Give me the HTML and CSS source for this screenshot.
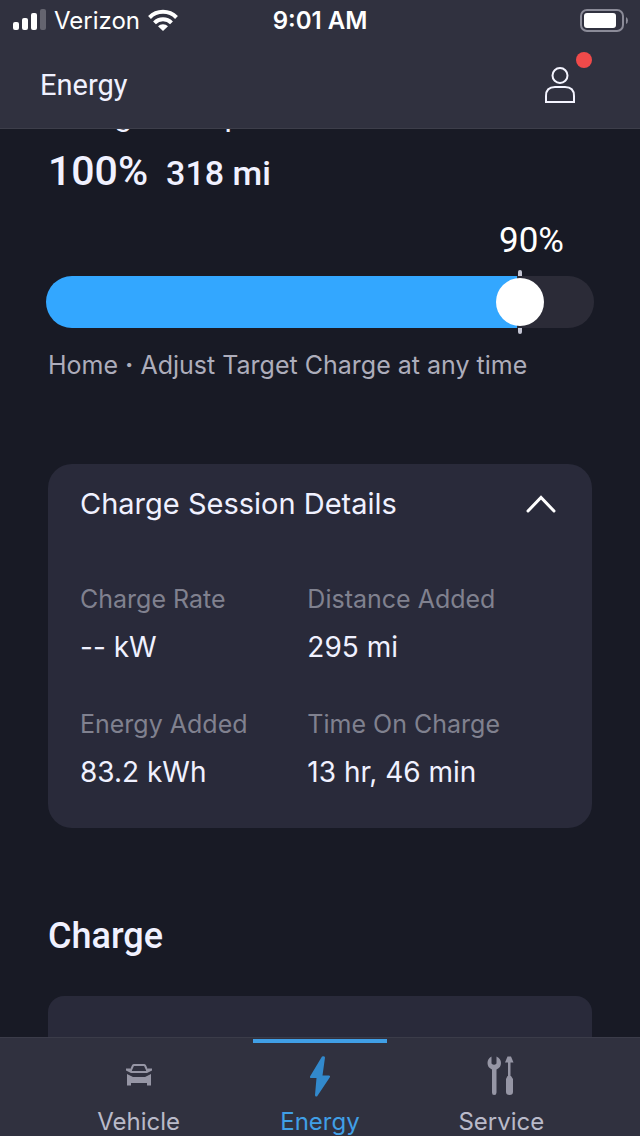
FILE: index.html
```
<!DOCTYPE html>
<html lang="en">
<head>
    <meta charset="utf-8" />
    <meta name="viewport" content="width=device-width, initial-scale=1" />
    <title>Energy</title>

    <link rel="stylesheet" href="styles.css">
</head>

<body>

    <header class="topBar">
        <div class="statusBar">
            <div class="carrier">
                <svg width="34" height="22" viewBox="0 0 34 22" fill="#fff" aria-hidden="true">
                    <rect x="1" y="13" width="6" height="8" rx="2"/>
                    <rect x="10" y="9" width="6" height="12" rx="2"/>
                    <rect x="19" y="4" width="6" height="17" rx="2"/>
                    <rect x="28" y="0" width="6" height="21" rx="2" opacity=".25"/>
                </svg>
                <span>Verizon</span>
                <svg width="30" height="22" viewBox="0 0 30 22" aria-hidden="true">
                    <g fill="none" stroke="#fff" stroke-width="4">
                        <path d="M1.5 8.5a19 19 0 0 1 27 0"/>
                        <path d="M6.5 13.8a12 12 0 0 1 17 0"/>
                    </g>
                    <path fill="#fff" d="M10 17.3a7 7 0 0 1 10 0L15 22z"/>
                </svg>
            </div>
            <span class="clock">9:01 AM</span>
            <svg class="battery" width="48" height="23" viewBox="0 0 48 23" aria-hidden="true">
                <rect x="1" y="1" width="42" height="21" rx="6" fill="none" stroke="#8b8b98" stroke-width="2"/>
                <rect x="4" y="4" width="32" height="15" rx="3" fill="#fff"/>
                <path d="M46 8q2 1 2 3.500t-2 3.500z" fill="#8b8b98"/>
            </svg>
        </div>
        <div class="titleRow">
            <h1>Energy</h1>
            <button class="profile" aria-label="Profile">
                <svg width="30" height="38" viewBox="0 0 30 38" fill="none" stroke="#f4f4ff" stroke-width="2" aria-hidden="true">
                    <circle cx="15" cy="9.500" r="7.500"/>
                    <path d="M1 36V30q0-9 9-9h10q9 0 9 9v6z"/>
                </svg>
                <span class="dot"></span>
            </button>
        </div>
    </header>

    <main>
        <h2 class="state">Charge Complete</h2>
        <p class="level"><span class="percent">100%</span><span>318 mi</span></p>

        <section class="target">
            <output for="targetCharge">90%</output>
            <div class="sliderWrap">
                <input type="range" id="targetCharge" min="0" max="100" value="90" aria-label="Target Charge">
            </div>
            <p class="hint">Home <b>·</b> Adjust Target Charge at any time</p>
        </section>

        <section class="card details">
            <button class="cardHead" aria-expanded="true">
                <span>Charge Session Details</span>
                <svg width="30" height="18" viewBox="0 0 30 18" fill="none" stroke="#fff" stroke-width="3" stroke-linecap="round" aria-hidden="true">
                    <path d="M2 16L15 2.500L28 16"/>
                </svg>
            </button>
            <dl>
                <div><dt>Charge Rate</dt><dd>-- kW</dd></div>
                <div><dt>Distance Added</dt><dd>295 mi</dd></div>
                <div><dt>Energy Added</dt><dd>83.2 kWh</dd></div>
                <div><dt>Time On Charge</dt><dd>13 hr, 46 min</dd></div>
            </dl>
        </section>

        <h2 class="heading">Charge</h2>
        <section class="card nextCard"></section>
    </main>

    <nav>
        <a href="#vehicle">
            <svg width="28" height="42" viewBox="0 0 28 42" aria-hidden="true">
                <path d="M5.500 16L8 10.500Q8.300 10 9 10H19Q19.700 10 20 10.500L22.500 16" fill="none" stroke="#9696a5" stroke-width="2"/>
                <path d="M1 13.500h4l2 2.500h14l2-2.500h4v2l-5 2.500H6L1 15.500z" fill="#9696a5"/>
                <path d="M2 19l6 3h12l6-3v11.500h-4V28H6v2.500H2z" fill="#9696a5"/>
            </svg>
            <span>Vehicle</span>
        </a>
        <a href="#energy" class="active" aria-current="page">
            <svg width="28" height="42" viewBox="0 0 28 42" aria-hidden="true">
                <path d="M16 1.500L4 21.500Q3.500 23 5 23H10.500L9 40Q9 42 11 41.500L24 22Q24.500 20.500 23 20.500H16.500L19 2.500Q18.500 .500 16 1.500z" fill="#3289cc"/>
            </svg>
            <span>Energy</span>
        </a>
        <a href="#service">
            <svg width="28" height="42" viewBox="0 0 28 42" fill="#9696a5" aria-hidden="true">
                <path d="M4.500 1.500V8.500q2.500 2.500 5 0V1.500Q14 3.500 14 8T9.500 14.500V37.500Q9.500 40 7.200 40T5 37.500V14.500Q.500 12.500 .500 8T4.500 1.500z"/>
                <path d="M20.500 1.500h3.500l2.500 6h-3v14.500h-2.500V7.500h-3z"/>
                <path d="M20.500 21h3.500l2 3v13q0 3-3.500 3T19 37V24z"/>
            </svg>
            <span>Service</span>
        </a>
    </nav>

</body>
</html>
```
FILE: styles.css
```
*{
    box-sizing: border-box;
}

body{
    margin: 0;
    height: 100vh;
    display: flex;
    flex-direction: column;
    background: #181a25;
    color: #f0f1ff;
    font-family: Inter, "Liberation Sans", sans-serif;
    font-size: 24px;
}

h1, h2, p, dl, dd{
    margin: 0;
}

button{
    border: 0;
    padding: 0;
    background: none;
    color: inherit;
    font: inherit;
    cursor: pointer;
}

svg{
    display: block;
    flex: none;
}

/* status bar and title */

.topBar{
    flex: none;
    background: #30313f;
    border-bottom: 1px solid #3d3e4a;
}

.statusBar{
    display: grid;
    grid-template-columns: 1fr auto 1fr;
    align-items: center;
    height: 40px;
    padding: 0 12px;
    color: #fff;
}

.carrier{
    display: flex;
    align-items: center;
    gap: 8px;
}

.clock{
    font-weight: 600;
}

.battery{
    justify-self: end;
}

.titleRow{
    display: flex;
    justify-content: space-between;
    align-items: center;
    height: 88px;
    padding: 2px 65px 0 40px;
}

h1, h2, .level, output{
    font-family: Roboto, "Liberation Sans", sans-serif;
}

h1{
    font-size: 29px;
    line-height: 32px;
    font-weight: 400;
}

.profile{
    position: relative;
}

.dot{
    position: absolute;
    top: -14px;
    right: -17px;
    width: 16px;
    height: 16px;
    border-radius: 50%;
    background: #f04a4a;
}

/* scrolled content */

main{
    flex: 1;
    min-height: 0;
    overflow: hidden;
    padding: 0 48px;
}

.heading{
    font-size: 36px;
    line-height: 48px;
    font-weight: 500;
}

/* scrolled up under the title bar */
.state{
    margin-top: -30px;
    font-size: 32px;
    line-height: 32px;
    font-weight: 400;
}

.level{
    display: flex;
    align-items: baseline;
    gap: 18px;
    padding-top: 16px;
    font-size: 34px;
    line-height: 48px;
    font-weight: 500;
}

.percent{
    font-size: 41px;
}

output{
    display: block;
    padding: 24px 28px 15px 0;
    font-size: 35px;
    line-height: 40px;
    text-align: right;
    color: #fff;
}

.sliderWrap{
    position: relative;
    margin: 0 -2px;
}

.sliderWrap::before{
    content: "";
    position: absolute;
    top: -6px;
    bottom: -6px;
    left: calc(22px + (100% - 48px) * 0.9);
    width: 4px;
    border-radius: 2px;
    background: #c3c4d2;
}

input[type=range]{
    appearance: none;
    position: relative;
    display: block;
    width: 100%;
    height: 52px;
    margin: 0;
    border-radius: 26px;
    background: linear-gradient(to right, #33a7ff 86%, #2b2b37 86%);
}

input[type=range]::-webkit-slider-thumb{
    appearance: none;
    width: 48px;
    height: 48px;
    border-radius: 50%;
    background: #fff;
}

.hint{
    padding-top: 21px;
    font-size: 25px;
    line-height: 32px;
    color: #adadbb;
}

.card{
    border-radius: 24px;
    background: #292a3a;
}

.details{
    margin: 83px 0 84px;
    padding: 24px 32px 40px;
}

.cardHead{
    display: flex;
    justify-content: space-between;
    align-items: center;
    width: 100%;
    padding-right: 4px;
    font-size: 29px;
    line-height: 32px;
}

dl{
    display: grid;
    grid-template-columns: 9fr 10fr;
    row-gap: 45px;
    margin-top: 63px;
    line-height: 32px;
}

dt{
    font-size: 25px;
    color: #80818f;
}

dd{
    margin-top: 16px;
    font-size: 28px;
}

.nextCard{
    height: 200px;
    margin-top: 36px;
    border-radius: 16px;
}

/* tab bar */

nav{
    flex: none;
    display: grid;
    grid-template-columns: repeat(3, 1fr);
    padding: 0 48px;
    background: #30313f;
    border-top: 1px solid #3b3c49;
}

nav a{
    display: flex;
    flex-direction: column;
    align-items: center;
    gap: 9px;
    height: 98px;
    padding-top: 17px;
    line-height: 32px;
    color: #b9bac9;
    text-decoration: none;
}

nav .active{
    position: relative;
    color: #409fe6;
}

.active::before{
    content: "";
    position: absolute;
    top: 1px;
    width: 134px;
    height: 4px;
    background: #409fe6;
}
```
